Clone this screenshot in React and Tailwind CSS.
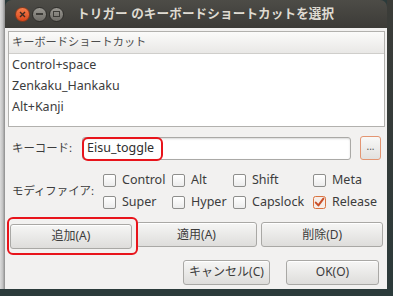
import React from 'react';

const font = { fontFamily: '"Noto Sans", "Noto Sans CJK JP", sans-serif' };

function Check({ label, checked }) {
  return (
    <div className="flex items-center h-[22px]">
      {checked ? (
        <svg width="13" height="13" viewBox="0 0 13 13" className="shrink-0">
          <rect x="0.5" y="0.5" width="12" height="12" rx="2" fill="#f6eee9" stroke="#d9733f" />
          <path d="M2.8 6.6 L5.4 9.4 L10.4 2.6" fill="none" stroke="#c9502a" strokeWidth="2" strokeLinecap="round" strokeLinejoin="round" />
        </svg>
      ) : (
        <span className="shrink-0 w-[13px] h-[13px] rounded-[2px] border border-[#8e8e8c] bg-gradient-to-b from-white to-[#ececec]" />
      )}
      <span className="ml-[6px] text-[12.5px] text-[#3c3c3c]">{label}</span>
    </div>
  );
}

function Button({ children, className }) {
  return (
    <button
      className={
        'h-[25px] rounded-[3px] border border-[#a9a8a5] bg-gradient-to-b from-[#f6f6f5] to-[#dedddb] text-[12px] text-[#3c3c3c] shadow-[inset_0_1px_0_#ffffff] ' +
        (className || '')
      }
    >
      {children}
    </button>
  );
}

export default function App() {
  return (
    <div className="w-[393px] h-[296px] flex flex-col bg-[#2b3a3a] overflow-hidden" style={font}>
      <div className="h-[289px] flex">
        <div className="w-[5px] bg-gradient-to-r from-[#dcdcdc] via-[#c4c4c4] to-[#8d8d8d]" />
        <div className="w-[382px] flex flex-col">
          {/* title bar */}
          <div className="h-[28px] rounded-t-[7px] bg-gradient-to-b from-[#4d4c47] to-[#3c3b37] flex items-center pl-[10px]">
            <div className="flex gap-[2px]">
              <span className="w-[15px] h-[15px] rounded-full bg-gradient-to-b from-[#f57d4b] to-[#d9461a] border border-[#8a3a1c] flex items-center justify-center">
                <svg width="7" height="7" viewBox="0 0 7 7">
                  <path d="M1 1 L6 6 M6 1 L1 6" stroke="#3c2a22" strokeWidth="1.4" />
                </svg>
              </span>
              <span className="w-[15px] h-[15px] rounded-full bg-gradient-to-b from-[#9a9892] to-[#6f6d68] border border-[#2f2e2b] flex items-center justify-center">
                <span className="w-[7px] h-[2px] bg-[#3c3b37]" />
              </span>
              <span className="w-[15px] h-[15px] rounded-full bg-gradient-to-b from-[#9a9892] to-[#6f6d68] border border-[#2f2e2b] flex items-center justify-center">
                <span className="w-[7px] h-[6px] border-[1.5px] border-[#3c3b37]" />
              </span>
            </div>
            <span className="ml-[13px] text-[12.6px] font-bold text-[#dfdbd2] tracking-[0.1px]">
              トリガー のキーボードショートカットを選択
            </span>
          </div>

          {/* body */}
          <div className="flex-1 bg-[#f2f1f0] flex flex-col">
            <div className="mt-[3px] ml-[3px] mr-[2px] h-[96px] border border-[#b2b1ae] bg-white flex flex-col">
              <div className="h-[22px] bg-gradient-to-b from-[#fbfbfa] to-[#e9e8e6] border-b border-[#cfcecb] flex items-center pl-[3px] text-[11.2px] text-[#4c4c4c]">
                キーボードショートカット
              </div>
              <div className="flex flex-col pl-[3px] text-[12.5px] text-[#3c3c3c]">
                <div className="h-[22px] flex items-center">Control+space</div>
                <div className="h-[21px] flex items-center">Zenkaku_Hankaku</div>
                <div className="h-[21px] flex items-center">Alt+Kanji</div>
              </div>
            </div>

            {/* key code */}
            <div className="mt-[9px] flex items-center h-[24px]">
              <span className="ml-[7px] w-[70px] text-[11.4px] text-[#3c3c3c]">キーコード:</span>
              <div className="relative w-[269px] h-[23px] rounded-[3px] border border-[#aaa9a6] bg-white shadow-[inset_0_1px_2px_#d8d8d8] flex items-center pl-[4px] text-[12.5px] text-[#2e2e2e]">
                Eisu_toggle
                <span className="absolute left-[-1px] top-[-1px] w-[81px] h-[24px] rounded-[6px] border-2 border-[#e8141b]" />
              </div>
              <button className="ml-[9px] w-[21px] h-[24px] rounded-[3px] border border-[#e39572] bg-gradient-to-b from-[#f8f8f7] to-[#e2e1df] text-[10px] leading-none text-[#555] pb-[4px]">
                ...
              </button>
            </div>

            {/* modifiers */}
            <div className="mt-[9px] flex">
              <span className="ml-[7px] w-[91px] self-center text-[11.4px] text-[#3c3c3c]">モディファイア:</span>
              <div className="grid grid-cols-[69px_61px_80px_auto]">
                <Check label="Control" />
                <Check label="Alt" />
                <Check label="Shift" />
                <Check label="Meta" />
                <Check label="Super" />
                <Check label="Hyper" />
                <Check label="Capslock" />
                <Check label="Release" checked />
              </div>
            </div>

            {/* add / apply / delete */}
            <div className="mt-[9px] ml-[5px] mr-[4px] grid grid-cols-3 gap-[4px]">
              <div className="relative">
                <Button className="w-full">追加(A)</Button>
                <span className="absolute left-[-3px] right-[-6px] top-[-5px] bottom-[-6px] rounded-[6px] border-2 border-[#e8141b]" />
              </div>
              <Button>適用(A)</Button>
              <Button>削除(D)</Button>
            </div>

            {/* cancel / ok */}
            <div className="mt-[11px] mr-[8px] flex justify-end gap-[16px]">
              <Button className="w-[87px]">キャンセル(C)</Button>
              <Button className="w-[93px]">OK(O)</Button>
            </div>
          </div>
        </div>
        <div className="flex-1 bg-gradient-to-b from-[#3b3c38] to-[#2c3a3a]" />
      </div>
      <div className="flex-1 bg-[#2b3b3b]" />
    </div>
  );
}
